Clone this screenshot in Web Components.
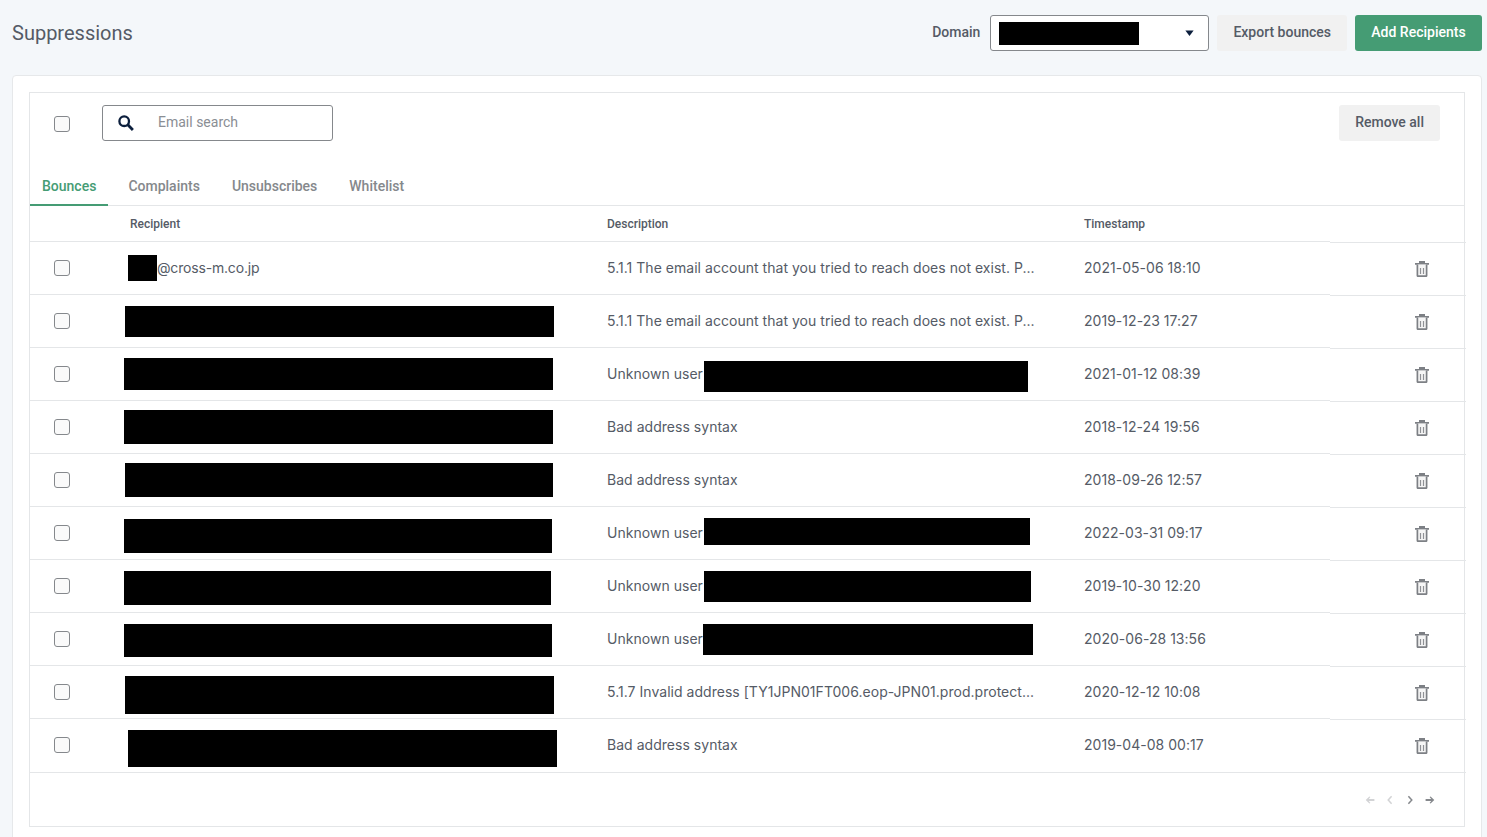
<!DOCTYPE html>
<html>
<head>
<meta charset="utf-8">
<title>Suppressions</title>
<style>
  html, body { margin: 0; height: 837px; overflow: hidden; background: #f4f7fa; }
  body { font-family: "Roboto", "Liberation Sans", sans-serif; color: #555b66; }
</style>
</head>
<body>
<suppressions-page></suppressions-page>
<script>
  class SupButton extends HTMLElement {
    constructor() {
      super();
      const shadow = this.attachShadow({ mode: "open" });
      shadow.innerHTML = `
        <style>
          :host {
            display: inline-flex; align-items: center; justify-content: center;
            height: 36px; padding: 0 16px 2px; box-sizing: border-box; border-radius: 3px;
            background: #f1f1f1; color: #555b66;
            font: 500 14px "Roboto", sans-serif; white-space: nowrap;
          }
          :host([primary]) { background: #459c74; color: #fff; width: 127px; padding: 0 0 2px; }
        </style>
        <slot></slot>`;
    }
  }
  customElements.define("sup-button", SupButton);

  class SupCheckbox extends HTMLElement {
    constructor() {
      super();
      const shadow = this.attachShadow({ mode: "open" });
      shadow.innerHTML = `
        <style>
          :host { display: inline-block; width: 16px; height: 16px; }
          input {
            appearance: none; display: block; margin: 0; width: 16px; height: 16px;
            box-sizing: border-box; border: 1px solid #85888c; border-radius: 3px; background: #fafafa;
          }
        </style>
        <input type="checkbox">`;
    }
  }
  customElements.define("sup-checkbox", SupCheckbox);

  // black bar laid over content that was blanked out in the screenshot
  class SupRedact extends HTMLElement {
    constructor() {
      super();
      const shadow = this.attachShadow({ mode: "open" });
      shadow.innerHTML = `<style>:host { display: block; position: absolute; background: #000; }</style>`;
    }
    connectedCallback() {
      const [x, y, w, h] = this.getAttribute("box").split(",");
      this.style.left = x + "px";
      this.style.top = y + "px";
      this.style.width = w + "px";
      this.style.height = h + "px";
    }
  }
  customElements.define("sup-redact", SupRedact);

  class SupHeader extends HTMLElement {
    constructor() {
      super();
      const shadow = this.attachShadow({ mode: "open" });
      shadow.innerHTML = `
        <style>
          :host {
            display: flex; align-items: center; height: 75px; box-sizing: border-box;
            padding: 0 5px 9px 12px;
          }
          h1 { margin: 0; font: 400 20px "Roboto", sans-serif; color: #555b66; flex: 1; }
          label { font: 500 14px "Roboto", sans-serif; color: #555b66; margin: 0 10px 2px 0; }
          .select {
            position: relative; width: 219px; height: 36px; box-sizing: border-box; margin-right: 8px;
            border: 1px solid #85888c; border-radius: 3px; background: #fff;
          }
          .caret { position: absolute; right: 14px; top: 14px; display: block; }
          sup-button + sup-button { margin-left: 8px; }
        </style>
        <h1>Suppressions</h1>
        <label>Domain</label>
        <div class="select">
          <sup-redact box="8,6,140,23"></sup-redact>
          <svg class="caret" width="9" height="6" viewBox="0 0 9 6"><path d="M.4 .5h8.2L4.5 5.9z" fill="#0c1f3d"/></svg>
        </div>
        <sup-button>Export bounces</sup-button>
        <sup-button primary>Add Recipients</sup-button>`;
    }
  }
  customElements.define("sup-header", SupHeader);

  class SupToolbar extends HTMLElement {
    constructor() {
      super();
      const shadow = this.attachShadow({ mode: "open" });
      shadow.innerHTML = `
        <style>
          :host { display: flex; align-items: center; height: 60px; padding: 0 24px; box-sizing: border-box; }
          sup-checkbox { margin-top: 2px; }
          .search {
            display: flex; align-items: center; width: 231px; height: 36px; box-sizing: border-box;
            margin-left: 32px; padding: 0 0 2px 15px; border: 1px solid #85888c; border-radius: 3px; background: #fff;
            font: 400 14px "Roboto", sans-serif; color: #8a8e94;
          }
          svg { display: block; margin: 2px 24px 0 0; }
          sup-button { margin-left: auto; }
        </style>
        <sup-checkbox></sup-checkbox>
        <div class="search">
          <svg width="16" height="16" viewBox="0 0 16 16" fill="none" stroke="#0c1f3d">
            <circle cx="6.2" cy="6.2" r="4.8" stroke-width="2.3"/>
            <path d="M9.8 9.8 L14.9 14.9" stroke-width="2.8"/>
          </svg>
          Email search
        </div>
        <sup-button>Remove all</sup-button>`;
    }
  }
  customElements.define("sup-toolbar", SupToolbar);

  class SupTabs extends HTMLElement {
    constructor() {
      super();
      const shadow = this.attachShadow({ mode: "open" });
      const tabs = ["Bounces", "Complaints", "Unsubscribes", "Whitelist"];
      shadow.innerHTML = `
        <style>
          :host {
            display: flex; gap: 8px; height: 53px; box-sizing: border-box; padding-top: 16px;
            border-bottom: 1px solid #e4e6e8;
          }
          div {
            height: 37px; box-sizing: border-box; padding: 7px 12px 0;
            font: 500 14px/20px "Roboto", sans-serif; color: #85888c;
          }
          .on { color: #459c74; border-bottom: 2px solid #459c74; }
        </style>
        ${tabs.map((t, i) => `<div class="${i === 0 ? "on" : ""}">${t}</div>`).join("")}`;
    }
  }
  customElements.define("sup-tabs", SupTabs);

  const rowStyle = `
    :host {
      display: grid; grid-template-columns: 88px 477px 477px 258px 136px; position: relative;
    }
    .cell {
      box-sizing: border-box; height: var(--row-h); border-bottom: 1px solid #e4e6e8;
      display: flex; align-items: center; padding: 0 12px; white-space: nowrap;
    }
    .check { padding: 0 0 0 24px; }
    .act { margin-top: 1px; margin-bottom: -1px; }
  `;

  class SupTableHead extends HTMLElement {
    constructor() {
      super();
      const shadow = this.attachShadow({ mode: "open" });
      shadow.innerHTML = `
        <style>
          ${rowStyle}
          :host { --row-h: 36px; font: 500 12px "Roboto", sans-serif; color: #555b66; }
        </style>
        <div class="cell"></div>
        <div class="cell">Recipient</div>
        <div class="cell">Description</div>
        <div class="cell">Timestamp</div>
        <div class="cell act"></div>`;
    }
  }
  customElements.define("sup-table-head", SupTableHead);

  class SupRow extends HTMLElement {
    constructor() {
      super();
      const shadow = this.attachShadow({ mode: "open" });
      shadow.innerHTML = `
        <style>
          ${rowStyle}
          :host { --row-h: 53px; font: 400 14px "Inter", sans-serif; letter-spacing: 0.03px; color: #555b66; }
          .text { padding-bottom: 2px; }
          .act { height: 53px; }
          :host([last]) { --row-h: 54px; }
          :host([last]) .text { padding-bottom: 3px; }
          :host([last]) .check { padding-bottom: 1px; }
          .trash { margin-left: 73px; display: block; }
        </style>
        <div class="cell check"><sup-checkbox></sup-checkbox></div>
        <div class="cell text"><slot name="recipient"></slot></div>
        <div class="cell text"><slot name="description"></slot></div>
        <div class="cell text"><slot name="time"></slot></div>
        <div class="cell act">
          <svg class="trash" width="14" height="16" viewBox="0 0 14 16">
            <path d="M0 2h14v1.7H0zM4 0h6v2H4z" fill="#7d8085"/>
            <path d="M2.4 3.5v11.2a.5.5 0 0 0 .5.5h8.2a.5.5 0 0 0 .5-.5V3.5" fill="#f6f6f6" stroke="#7d8085" stroke-width="1.7"/>
            <path d="M5.5 7v6M8.5 7v6" stroke="#8f9195" stroke-width="1.2"/>
          </svg>
        </div>
        <slot></slot>`;
    }
  }
  customElements.define("sup-row", SupRow);

  class SupPager extends HTMLElement {
    constructor() {
      super();
      const shadow = this.attachShadow({ mode: "open" });
      const light = "#d2d3d5";
      const dark = "#85888c";
      const chevron = (d, color) =>
        `<svg width="12" height="12" viewBox="0 0 12 12" fill="none" stroke="${color}" stroke-width="1.5"><path d="${d}"/></svg>`;
      const arrow = (d, color) =>
        `<svg width="12" height="12" viewBox="0 0 12 12" fill="${color}"><path d="${d}"/></svg>`;
      shadow.innerHTML = `
        <style>
          :host {
            display: flex; justify-content: flex-end; align-items: center; gap: 8px;
            height: 53px; padding: 0 28px 0 0; box-sizing: border-box;
          }
          svg { display: block; }
        </style>
        ${arrow("M1.7 6 5.4 2.4 6.4 3 4.8 5h5.6v2H4.8l1.6 2-1 .6z", light)}
        ${chevron("M7.6 2.2 4.2 6l3.4 3.8", light)}
        ${chevron("M4.4 2.2 7.8 6l-3.4 3.8", dark)}
        ${arrow("M10.3 6 6.6 2.4l-1 .6 1.6 2H1.6v2h5.6l-1.6 2 1 .6z", dark)}`;
    }
  }
  customElements.define("sup-pager", SupPager);

  class SuppressionsPage extends HTMLElement {
    constructor() {
      super();
      const shadow = this.attachShadow({ mode: "open" });
      const mail = "5.1.1 The email account that you tried to reach does not exist. P...";
      const rows = [
        { desc: mail, time: "2021-05-06 18:10", box: [[98, 13, 29, 26]], email: "@cross-m.co.jp" },
        { desc: mail, time: "2019-12-23 17:27", box: [[95, 11, 429, 31]] },
        { desc: "Unknown user", time: "2021-01-12 08:39", box: [[94, 10, 429, 32], [674, 13, 324, 31]] },
        { desc: "Bad address syntax", time: "2018-12-24 19:56", box: [[94, 9, 429, 34]] },
        { desc: "Bad address syntax", time: "2018-09-26 12:57", box: [[95, 9, 428, 34]] },
        { desc: "Unknown user", time: "2022-03-31 09:17", box: [[94, 12, 428, 34], [674, 11, 326, 27]] },
        { desc: "Unknown user", time: "2019-10-30 12:20", box: [[94, 11, 427, 34], [674, 11, 327, 31]] },
        { desc: "Unknown user", time: "2020-06-28 13:56", box: [[94, 11, 428, 33], [673, 11, 330, 31]] },
        { desc: "5.1.7 Invalid address [TY1JPN01FT006.eop-JPN01.prod.protect...", time: "2020-12-12 10:08", box: [[95, 10, 429, 38]] },
        { desc: "Bad address syntax", time: "2019-04-08 00:17", box: [[98, 11, 429, 37]] },
      ];
      const rowHtml = rows.map((r, i) => `
        <sup-row ${i === rows.length - 1 ? "last" : ""}>
          <span slot="recipient" style="padding-left:${r.email ? 27 : 0}px;letter-spacing:-0.18px">${r.email || ""}</span>
          <span slot="description">${r.desc}</span>
          <span slot="time">${r.time}</span>
          ${r.box.map((b) => `<sup-redact box="${b.join(",")}"></sup-redact>`).join("")}
        </sup-row>`).join("");
      shadow.innerHTML = `
        <style>
          :host { display: block; }
          .card {
            margin: 0 5px 0 12px; height: 800px; box-sizing: border-box; padding: 16px;
            background: #fff; border: 1px solid #e6e8ea; border-radius: 4px;
          }
          .panel { width: 1436px; height: 735px; box-sizing: border-box; border: 1px solid #e4e6e8; }
        </style>
        <sup-header></sup-header>
        <div class="card">
          <div class="panel">
            <sup-toolbar></sup-toolbar>
            <sup-tabs></sup-tabs>
            <sup-table-head></sup-table-head>
            ${rowHtml}
            <sup-pager></sup-pager>
          </div>
        </div>`;
    }
  }
  customElements.define("suppressions-page", SuppressionsPage);
</script>
</body>
</html>
